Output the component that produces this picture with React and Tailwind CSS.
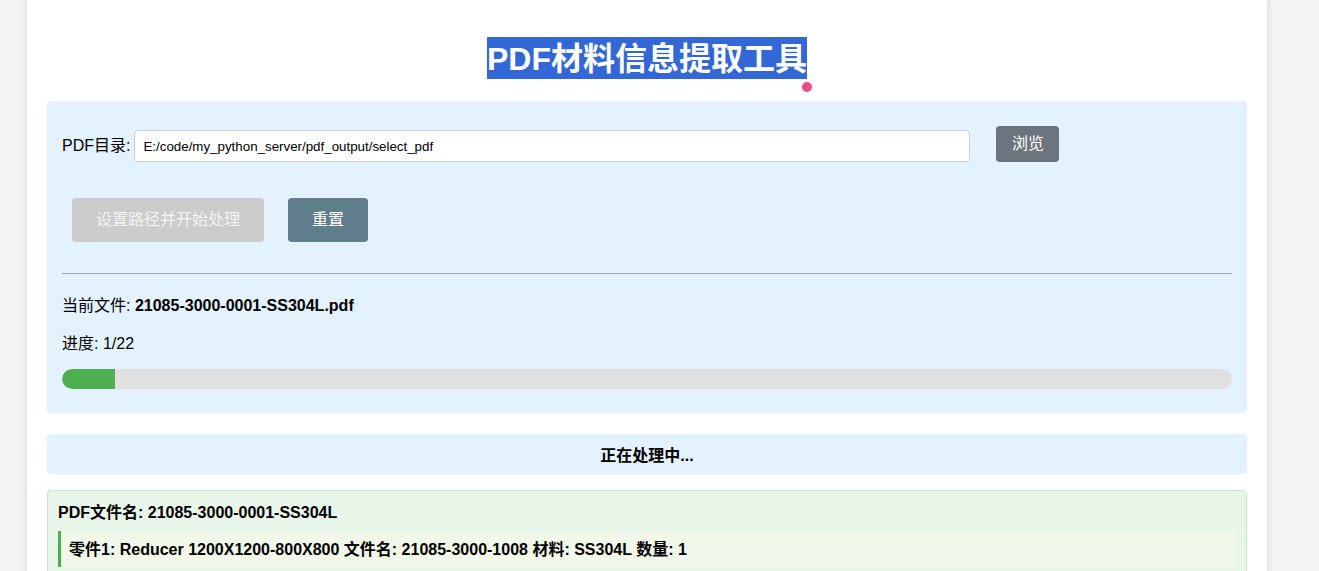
import React from 'react';

const font = { fontFamily: '"Liberation Sans", Arial, "Noto Sans CJK SC", sans-serif' };

export default function App() {
  const done = 1;
  const total = 22;
  const pct = (done / total) * 100;

  return (
    <div className="min-h-screen bg-[#f5f5f5] overflow-hidden" style={font}>
      <div className="relative ml-[27px] w-[1240px] bg-white rounded-lg shadow-[0_0_12px_rgba(0,0,0,0.12)] px-5 pb-10 -mt-2 pt-[45px] text-black">
        <h1 className="flex justify-center text-[32px] font-bold h-[42px] whitespace-nowrap">
          <span className="bg-[#3367d6] text-white leading-[38px] pt-[3px] pb-[1px]">PDF材料信息提取工具</span>
        </h1>
        <span className="absolute left-[775px] top-[90px] w-[10px] h-[10px] rounded-full bg-[#ec4a89]"></span>

        <div className="mt-[22px] bg-[#e3f2fd] rounded px-[15px] pt-[25px] pb-[24px]">
          <div className="flex items-end">
            <label className="text-base leading-5 mb-[6px]">PDF目录:</label>
            <input
              readOnly
              value="E:/code/my_python_server/pdf_output/select_pdf"
              className="ml-[4px] w-[836px] h-8 bg-white border border-[#ccc] rounded px-[8px] text-[13.33px] text-black outline-none"
              style={font}
            />
            <button className="ml-[26px] w-[63px] h-9 bg-[#6c757d] text-white text-base rounded">浏览</button>
          </div>

          <div className="flex mt-9 ml-[10px] gap-6">
            <button className="h-11 w-[192px] bg-[#cccccc] text-[#f3f3f3] text-base rounded">设置路径并开始处理</button>
            <button className="h-11 w-20 bg-[#607d8b] text-white text-base rounded">重置</button>
          </div>

          <hr className="mt-[31px] border-0 border-t border-[#a0a0a0]" />

          <p className="mt-[22px] text-base leading-5">
            当前文件: <strong>21085-3000-0001-SS304L.pdf</strong>
          </p>
          <p className="mt-[18px] text-base leading-5">进度: {done}/{total}</p>

          <div className="mt-[15px] h-5 bg-[#e0e0e0] rounded-full overflow-hidden">
            <div className="h-full bg-[#4caf50] rounded-l-full" style={{ width: `${pct}%` }}></div>
          </div>
        </div>

        <div className="mt-[21px] h-10 pt-1 bg-[#e3f2fd] rounded flex items-center justify-center font-bold text-base">
          正在处理中...
        </div>

        <div className="mt-4 bg-[#e8f5e9] border border-[#c8e6c9] rounded px-[10px] pt-[12px] pb-[10px]">
          <div className="font-bold text-base leading-5">PDF文件名: 21085-3000-0001-SS304L</div>
          <div className="mt-2 border-l-[3px] border-[#4caf50] bg-[#f1f8e9] px-[8px] pt-[9px] pb-[7px] font-bold text-base leading-5">
            零件1: Reducer 1200X1200-800X800 文件名: 21085-3000-1008 材料: SS304L 数量: 1
          </div>
        </div>
      </div>
    </div>
  );
}
